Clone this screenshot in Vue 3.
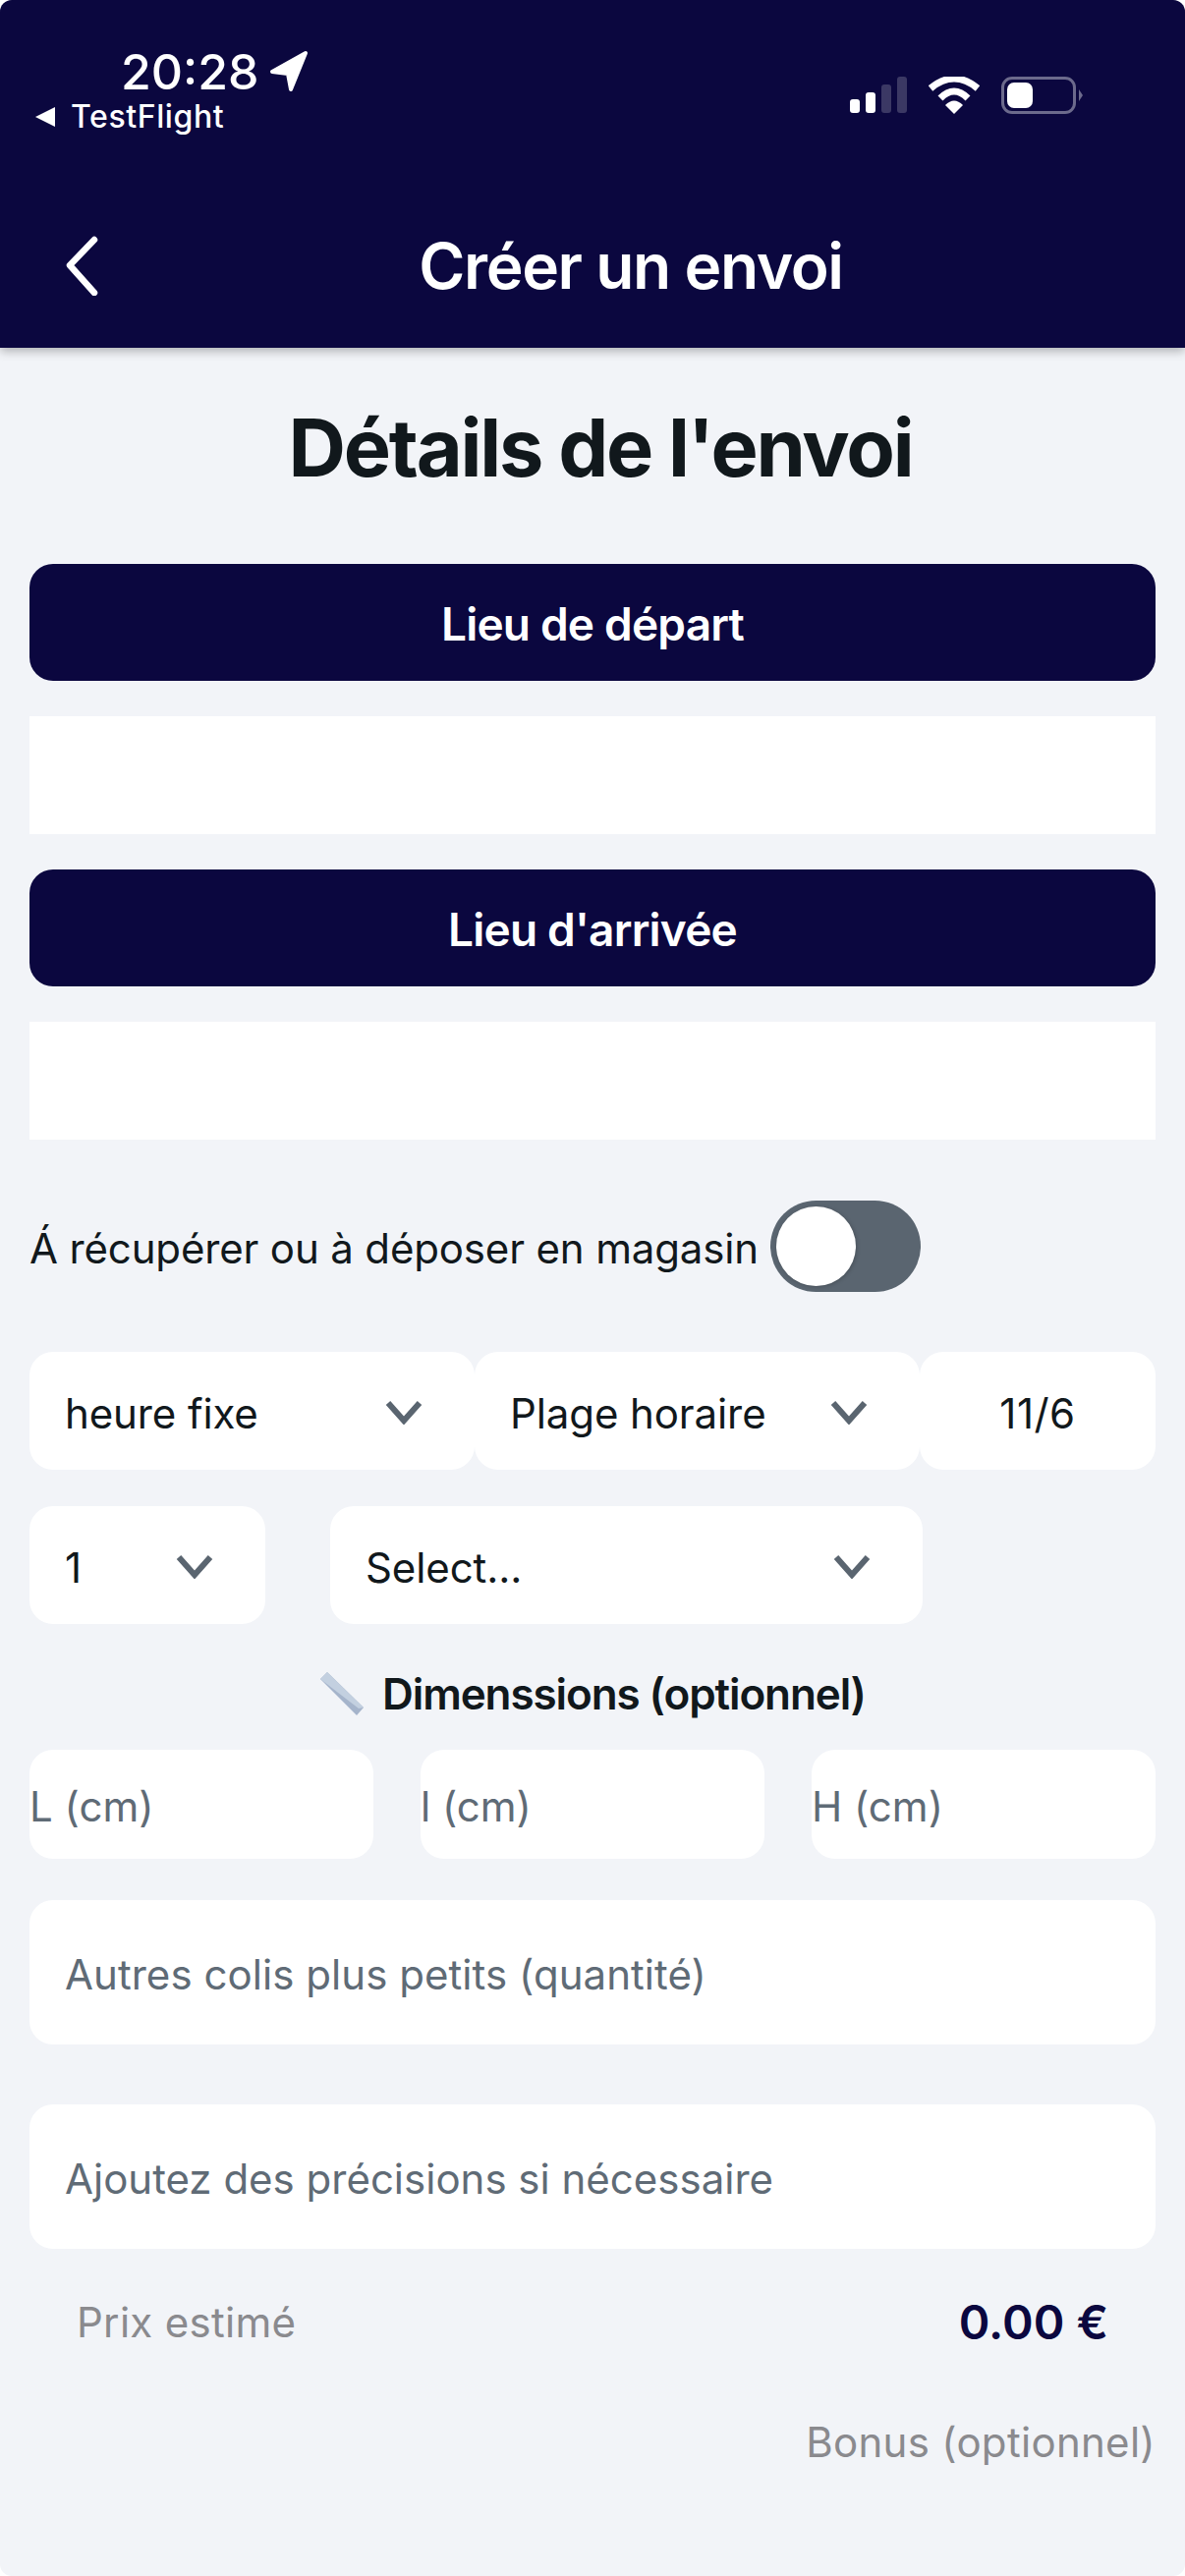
<template>
  <div class="screen">
    <header class="topbar">
      <div class="status">
        <div class="status-left">
          <div class="time-row">
            <span class="time">20:28</span>
            <svg class="loc" width="40" height="44" viewBox="0 0 40 44">
              <path d="M3 22 L37 3 L22 40 L19 24 Z" fill="#fff" stroke="#fff" stroke-width="4" stroke-linejoin="round" />
            </svg>
          </div>
          <div class="back-row">
            <span class="back-arrow"></span>
            <span>TestFlight</span>
          </div>
        </div>
        <div class="status-right">
          <div class="signal">
            <span class="bar on b1"></span>
            <span class="bar on b2"></span>
            <span class="bar b3"></span>
            <span class="bar b4"></span>
          </div>
          <svg class="wifi" width="52" height="38" viewBox="0 0 52 38">
            <path d="M2 12 Q26 -8 50 12" fill="none" stroke="#fff" stroke-width="7" />
            <path d="M12 22 Q26 8 40 22" fill="none" stroke="#fff" stroke-width="7" />
            <path d="M17 29 Q26 20 35 29 L26 38 Z" fill="#fff" />
          </svg>
          <div class="battery">
            <div class="battery-body"><span class="battery-level"></span></div>
            <span class="battery-cap"></span>
          </div>
        </div>
      </div>
      <div class="nav">
        <svg class="nav-back" width="40" height="62" viewBox="0 0 40 62">
          <path d="M32 5 L7 31 L32 59" fill="none" stroke="#fff" stroke-width="6.5" stroke-linecap="round" stroke-linejoin="round" />
        </svg>
        <h1 class="nav-title">Créer un envoi</h1>
      </div>
    </header>

    <main class="content">
      <h2 class="page-title">Détails de l'envoi</h2>

      <div class="place-btn">Lieu de départ</div>
      <div class="place-box"></div>
      <div class="place-btn">Lieu d'arrivée</div>
      <div class="place-box"></div>

      <div class="toggle-row">
        <span class="toggle-label">Á récupérer ou à déposer en magasin</span>
        <div class="toggle"><span class="thumb"></span></div>
      </div>

      <div class="row-time">
        <div v-for="s in timeSelects" :key="s" class="select wide">
          <span>{{ s }}</span>
          <svg class="chevron" width="40" height="26" viewBox="0 0 40 26">
            <path d="M4 4 L20 22 L36 4" fill="none" stroke="#5a6570" stroke-width="6" />
          </svg>
        </div>
        <div class="select date">11/6</div>
      </div>

      <div class="row-kind">
        <div class="select qty">
          <span>1</span>
          <svg class="chevron" width="40" height="26" viewBox="0 0 40 26">
            <path d="M4 4 L20 22 L36 4" fill="none" stroke="#5a6570" stroke-width="6" />
          </svg>
        </div>
        <div class="select kind">
          <span>Select...</span>
          <svg class="chevron" width="40" height="26" viewBox="0 0 40 26">
            <path d="M4 4 L20 22 L36 4" fill="none" stroke="#5a6570" stroke-width="6" />
          </svg>
        </div>
      </div>

      <div class="dim-title">
        <svg class="ruler" width="46" height="46" viewBox="0 0 46 46">
          <polygon points="1,8 8,1 45,37 38,45" fill="#a5b4cb" />
          <polygon points="1,8 8,1 45,37 40,38" fill="#c3d0e0" />
        </svg>
        <span>Dimenssions (optionnel)</span>
      </div>

      <div class="dims">
        <div v-for="d in dims" :key="d" class="dim">{{ d }}</div>
      </div>

      <div class="field first">Autres colis plus petits (quantité)</div>
      <div class="field">Ajoutez des précisions si nécessaire</div>

      <div class="price">
        <span class="price-label">Prix estimé</span>
        <span class="price-value">0.00 €</span>
      </div>
      <div class="bonus">Bonus (optionnel)</div>
    </main>
  </div>
</template>

<script setup>
const timeSelects = ["heure fixe", "Plage horaire"];
const dims = ["L (cm)", "l (cm)", "H (cm)"];
</script>

<style>
html,
body {
  margin: 0;
  background: #fff;
}
</style>

<style scoped>
.screen {
  width: 1206px;
  height: 2622px;
  background: #f2f4f8;
  border-radius: 12px;
  font-family: Inter, "Noto Sans", sans-serif;
  color: #11181c;
  overflow: hidden;
}

.topbar {
  height: 354px;
  box-sizing: border-box;
  background: #0b073f;
  color: #fff;
  box-shadow: 0 3px 10px rgba(0, 0, 0, 0.3);
  position: relative;
}

.status {
  height: 210px;
  box-sizing: border-box;
  display: flex;
  justify-content: space-between;
  padding: 50px 104px 0 36px;
}

.time-row {
  display: flex;
  align-items: center;
  gap: 10px;
  padding-left: 87px;
  height: 46px;
}

.time {
  font-size: 50px;
  font-weight: 500;
  line-height: 46px;
}

.back-row {
  display: flex;
  align-items: center;
  gap: 16px;
  font-size: 32px;
  font-weight: 500;
  line-height: 38px;
  margin-top: 4px;
  letter-spacing: 0.6px;
}

.back-arrow {
  width: 0;
  height: 0;
  border-top: 10px solid transparent;
  border-bottom: 10px solid transparent;
  border-right: 20px solid #fff;
}

.status-right {
  display: flex;
  align-items: flex-start;
  gap: 22px;
  padding-top: 28px;
}

.signal {
  display: flex;
  align-items: flex-end;
  gap: 6px;
  height: 37px;
}

.bar {
  width: 10px;
  border-radius: 3px;
  background: #3b3864;
}

.bar.on {
  background: #fff;
}

.b1 {
  height: 14px;
}

.b2 {
  height: 21px;
}

.b3 {
  height: 29px;
}

.b4 {
  height: 37px;
}

.battery {
  display: flex;
  align-items: center;
  gap: 3px;
}

.battery-body {
  width: 76px;
  height: 38px;
  box-sizing: border-box;
  border: 3px solid #6c6a8c;
  border-radius: 11px;
  padding: 3px;
}

.battery-level {
  display: block;
  width: 26px;
  height: 26px;
  background: #fff;
  border-radius: 7px;
}

.battery-cap {
  width: 0;
  height: 0;
  border-top: 6px solid transparent;
  border-bottom: 6px solid transparent;
  border-left: 4px solid #6c6a8c;
}

.nav {
  height: 120px;
  display: flex;
  align-items: center;
  justify-content: center;
  position: relative;
}

.nav-back {
  position: absolute;
  left: 64px;
  top: 29px;
}

.nav-title {
  margin: 0;
  font-size: 64px;
  font-weight: 600;
  letter-spacing: -1.4px;
  padding-left: 78px;
}

.content {
  padding: 0 30px;
}

.page-title {
  margin: 0;
  height: 220px;
  padding: 0 0 16px 16px;
  display: flex;
  align-items: center;
  justify-content: center;
  box-sizing: border-box;
  font-size: 81px;
  font-weight: 700;
  letter-spacing: -2.2px;
}

.place-btn {
  height: 119px;
  padding-top: 3px;
  box-sizing: border-box;
  background: #0b073f;
  border-radius: 24px;
  color: #fff;
  display: flex;
  align-items: center;
  justify-content: center;
  font-size: 46px;
  font-weight: 600;
  letter-spacing: -0.8px;
}

.place-box {
  height: 120px;
  margin: 36px 0;
  background: #fff;
}

.toggle-row {
  display: flex;
  align-items: center;
  gap: 12px;
  font-size: 42px;
  height: 93px;
  margin-top: 62px;
}

.toggle-label {
  padding-top: 4px;
  letter-spacing: -0.15px;
}

.toggle {
  width: 153px;
  height: 93px;
  box-sizing: border-box;
  border-radius: 47px;
  background: #5a6570;
  padding: 6px;
}

.thumb {
  display: block;
  width: 81px;
  height: 81px;
  border-radius: 50%;
  background: #fff;
  box-shadow: 1px 1px 4px rgba(0, 0, 0, 0.2);
}

.row-time {
  display: flex;
  margin-top: 61px;
}

.select {
  height: 120px;
  box-sizing: border-box;
  background: #fff;
  border-radius: 24px;
  display: flex;
  align-items: center;
  justify-content: space-between;
  padding: 4px 53px 0 36px;
  font-size: 42px;
  letter-spacing: -0.1px;
}

.wide {
  width: 453px;
}

.date {
  width: 240px;
  justify-content: center;
  padding: 4px 0 0;
  letter-spacing: 0.5px;
}

.chevron {
  margin-top: -2px;
  margin-right: -1px;
}

.row-kind {
  display: flex;
  gap: 66px;
  margin-top: 37px;
}

.qty {
  width: 240px;
}

.kind {
  width: 603px;
}

.dim-title {
  height: 128px;
  padding-top: 14px;
  box-sizing: border-box;
  display: flex;
  align-items: center;
  justify-content: center;
  gap: 18px;
  font-size: 44px;
  font-weight: 600;
  letter-spacing: -1.1px;
}

.ruler {
  flex: none;
}

.dims {
  display: flex;
  justify-content: space-between;
}

.dim {
  width: 350px;
  height: 111px;
  padding-top: 3px;
  box-sizing: border-box;
  background: #fff;
  border-radius: 24px;
  display: flex;
  align-items: center;
  font-size: 42px;
  color: #5f6b76;
}

.field {
  height: 147px;
  box-sizing: border-box;
  background: #fff;
  border-radius: 24px;
  display: flex;
  align-items: center;
  padding: 3px 36px 0;
  font-size: 42px;
  color: #5f6b76;
  margin-top: 61px;
}

.field.first {
  margin-top: 42px;
  letter-spacing: 0.05px;
}

.price {
  display: flex;
  justify-content: space-between;
  align-items: center;
  padding: 0 48px 0 48px;
  margin-top: 44px;
  height: 60px;
}

.price-label {
  font-size: 42px;
  letter-spacing: 0.3px;
  color: #8a8a8e;
}

.price-value {
  font-size: 48px;
  font-weight: 600;
  color: #0b073f;
}

.bonus {
  margin-top: 63px;
  text-align: right;
  font-size: 42px;
  letter-spacing: 0.3px;
  color: #8a8a8e;
  line-height: 60px;
}
</style>
